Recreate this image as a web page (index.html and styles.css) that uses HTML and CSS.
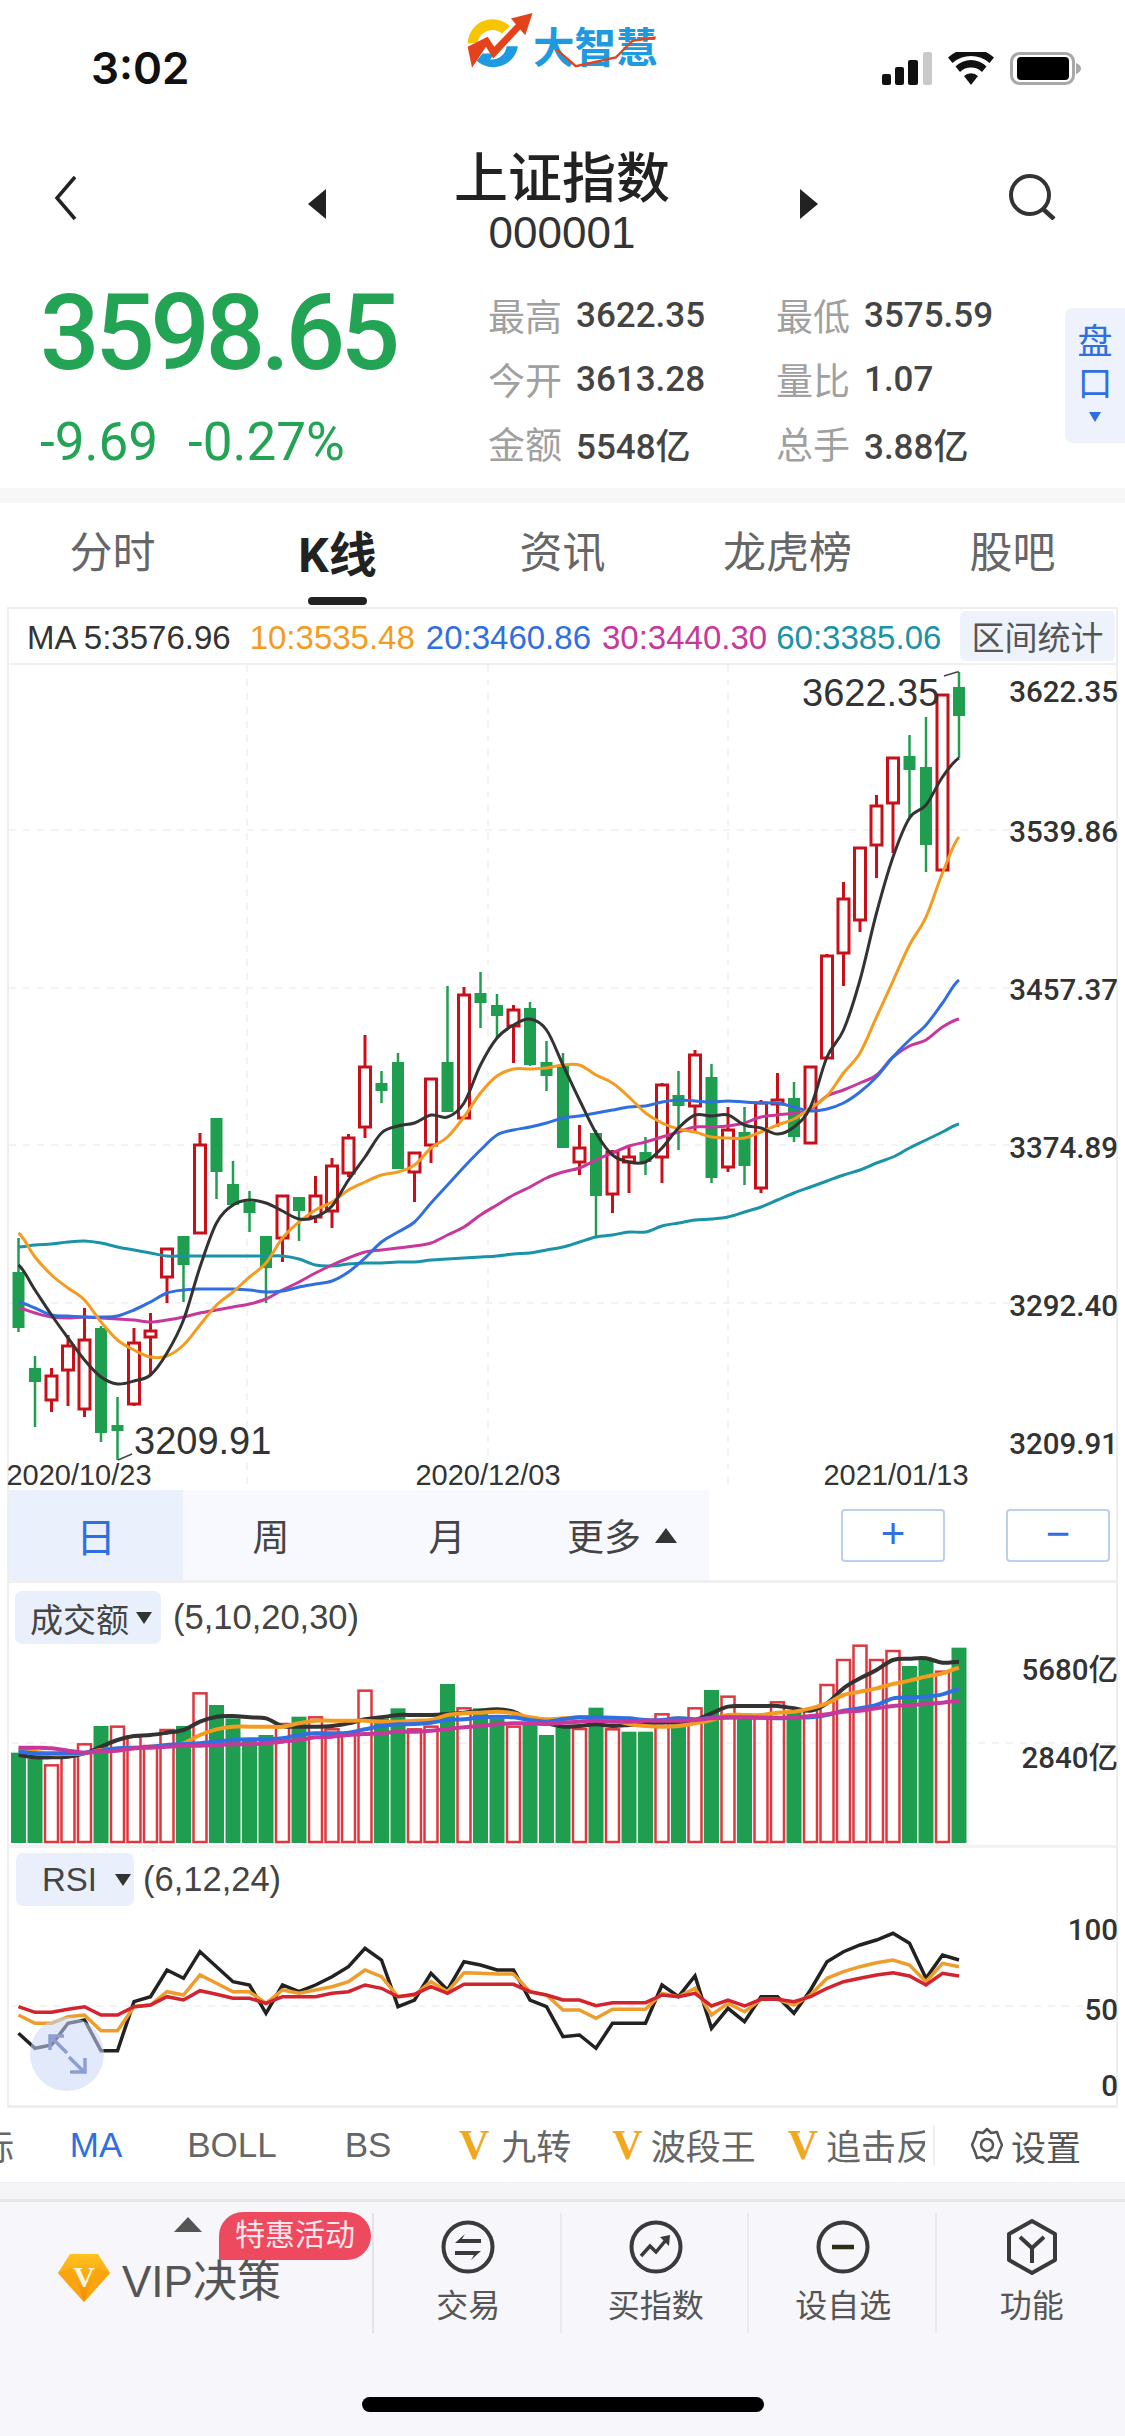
FILE: index.html
```html
<!DOCTYPE html>
<html lang="zh">
<head>
    <meta charset="utf-8">
    <title>上证指数 - K线</title>
    <link rel="stylesheet" href="styles.css">
</head>
<body>
    <div class="screen">
        <!-- status bar -->
        <div class="status">
            <span class="time">3:02</span>
            <svg class="logo" viewBox="140 30 580 185" width="193" height="62">
                <path d="M145 130A75 75 0 0 1 272 78L248 100A45 45 0 0 0 175 128Z" fill="#F7C600"/>
                <path d="M172 182A75 75 0 0 0 296 138L262 138A45 45 0 0 1 212 178L228 160L190 160Z" fill="#1E9BE0"/>
                <path d="M145 140L205 110L225 140L290 72L275 55L340 38L318 105L303 88L222 175L200 140L158 203Z" fill="#E4421B"/>
                <text class="logo-text" x="341" y="190">大智慧</text>
                <path d="M412 148L470 198L590 172L640 122L710 112" fill="none" stroke="#E4421B" stroke-width="7"/>
            </svg>
            <div class="status-icons">
                <svg width="50" height="33" viewBox="0 0 50 33">
                    <rect x="0" y="22" width="9" height="11" rx="2" fill="#111"/>
                    <rect x="13" y="15" width="9" height="18" rx="2" fill="#111"/>
                    <rect x="26" y="8" width="10" height="25" rx="2" fill="#111"/>
                    <rect x="41" y="0" width="9" height="33" rx="2" fill="#C9C9C9"/>
                </svg>
                <svg width="46" height="33" viewBox="0 0 46 33">
                    <path d="M23 33L16 24A10 10 0 0 1 30 24Z" fill="#111"/>
                    <path d="M12 20L7.500 14.500A22 22 0 0 1 38.500 14.500L34 20A16 16 0 0 0 12 20Z" fill="#111"/>
                    <path d="M4.500 11L0 5.500A34 34 0 0 1 46 5.500L41.500 11A28 28 0 0 0 4.500 11Z" fill="#111"/>
                </svg>
                <svg width="71" height="33" viewBox="0 0 71 33">
                    <rect x="1.500" y="1.500" width="62" height="30" rx="8" fill="none" stroke="#A8A8A8" stroke-width="3"/>
                    <rect x="7" y="5" width="52" height="23" rx="4" fill="#000"/>
                    <path d="M66 11C69 12 71 14 71 16.500S69 21 66 22Z" fill="#A8A8A8"/>
                </svg>
            </div>
        </div>

        <!-- stock title -->
        <div class="nav">
            <svg class="nav-back" width="23" height="46" viewBox="0 0 23 46">
                <path d="M21 2L3 23L21 44" fill="none" stroke="#222" stroke-width="3.500"/>
            </svg>
            <span class="tri-left"></span>
            <div class="nav-title">
                <div class="stock-name">上证指数</div>
                <div class="stock-code">000001</div>
            </div>
            <span class="tri-right"></span>
            <svg class="nav-search" width="48" height="46" viewBox="0 0 48 46">
                <circle cx="22" cy="21" r="19" fill="none" stroke="#333" stroke-width="4"/>
                <path d="M35 35L46 45" stroke="#333" stroke-width="4.500"/>
            </svg>
        </div>

        <!-- quote -->
        <div class="quote">
            <div class="price-box">
                <div class="last-price">3598.65</div>
                <div class="price-change"><span>-9.69</span><span>-0.27%</span></div>
            </div>
            <div class="quote-grid">
                <div class="cell"><span class="cell-key">最高</span><span class="cell-val">3622.35</span></div>
                <div class="cell"><span class="cell-key">最低</span><span class="cell-val">3575.59</span></div>
                <div class="cell"><span class="cell-key">今开</span><span class="cell-val">3613.28</span></div>
                <div class="cell"><span class="cell-key">量比</span><span class="cell-val">1.07</span></div>
                <div class="cell"><span class="cell-key">金额</span><span class="cell-val">5548亿</span></div>
                <div class="cell"><span class="cell-key">总手</span><span class="cell-val">3.88亿</span></div>
            </div>
            <div class="side-tab">
                <span>盘</span><span>口</span>
                <i class="side-arrow"></i>
            </div>
        </div>

        <div class="band"></div>

        <!-- tabs -->
        <div class="tabs">
            <a class="tab">分时</a>
            <a class="tab active">K线</a>
            <a class="tab">资讯</a>
            <a class="tab">龙虎榜</a>
            <a class="tab">股吧</a>
        </div>

        <!-- chart -->
        <div class="chart">
            <div class="ma-row">
                <span class="ma-black">MA 5:3576.96</span>
                <span class="ma-orange">10:3535.48</span>
                <span class="ma-blue">20:3460.86</span>
                <span class="ma-pink">30:3440.30</span>
                <span class="ma-teal">60:3385.06</span>
                <span class="stat-btn">区间统计</span>
            </div>

            <div class="price-panel">
                <svg id="priceChart" width="1107" height="825" viewBox="9 665 1107 825"></svg>
            </div>

            <div class="period-bar">
                <div class="period active">日</div>
                <div class="period">周</div>
                <div class="period">月</div>
                <div class="period more">更多<i class="up-arrow"></i></div>
                <div class="zoom-btns">
                    <span class="zoom-btn">+</span>
                    <span class="zoom-btn">−</span>
                </div>
            </div>

            <div class="sub-panel vol-panel">
                <svg id="volChart" width="1107" height="265" viewBox="9 1583 1107 265"></svg>
                <div class="sub-head">
                    <span class="chip chip-vol">成交额<i class="down-arrow"></i></span>
                    <span class="sub-params">(5,10,20,30)</span>
                </div>
            </div>

            <div class="sub-panel rsi-panel">
                <svg id="rsiChart" width="1107" height="257" viewBox="9 1848 1107 257"></svg>
                <div class="sub-head">
                    <span class="chip chip-rsi">RSI<i class="down-arrow"></i></span>
                    <span class="sub-params">(6,12,24)</span>
                </div>
                <svg class="expand-btn" width="74" height="74" viewBox="0 0 74 74">
                    <circle cx="37" cy="37" r="37" fill="#C9D7F5" fill-opacity="0.55"/>
                    <path d="M37 36L21 20M20 33V19H34M39 40L54 55M40 55H55V41" fill="none" stroke="#8D9FD2" stroke-width="3.500"/>
                </svg>
            </div>
        </div>

        <!-- indicator picker -->
        <div class="indicators">
            <div class="ind-scroll">
                <span class="ind ind-cut">指标</span>
                <span class="ind active">MA</span>
                <span class="ind">BOLL</span>
                <span class="ind">BS</span>
                <span class="ind-v first"><b>V</b>九转</span>
                <span class="ind-v second"><b>V</b>波段王</span>
                <span class="ind-v third"><b>V</b>追击反</span>
            </div>
            <div class="ind-setting">
                <svg width="32" height="36" viewBox="0 0 32 36">
                    <path d="M16 2L20 6L26 5L28 11L31 18L28 25L26 31L20 30L16 34L12 30L6 31L4 25L1 18L4 11L6 5L12 6Z" fill="none" stroke="#555" stroke-width="2.500" stroke-linejoin="round"/>
                    <circle cx="16" cy="18" r="6" fill="none" stroke="#555" stroke-width="2.500"/>
                </svg>
                <span>设置</span>
            </div>
        </div>

        <div class="band band-low"></div>

        <!-- bottom toolbar -->
        <div class="toolbar">
            <div class="tool-row">
                <div class="vip">
                    <i class="vip-arrow"></i>
                    <span class="vip-badge">特惠活动</span>
                    <svg width="52" height="48" viewBox="0 0 52 48">
                        <defs>
                            <linearGradient id="gem" x1="0" y1="0" x2="0" y2="1">
                                <stop offset="0" stop-color="#FFC21F"/>
                                <stop offset="1" stop-color="#F38A00"/>
                            </linearGradient>
                        </defs>
                        <path d="M12 0H40L52 19L26 48L0 19Z" fill="url(#gem)"/>
                        <path d="M0 19L14 14L26 48ZM52 19L38 14L26 48Z" fill="#F9A50F"/>
                        <text class="gem-v" x="26" y="33">V</text>
                    </svg>
                    <span class="vip-text">VIP决策</span>
                </div>
                <div class="tool">
                    <svg width="54" height="56" viewBox="0 0 54 56">
                        <circle cx="27" cy="28" r="24.500" fill="none" stroke="#3A3A3A" stroke-width="4"/>
                        <path d="M14 24H40V20H21L24 15Z" fill="#3A3A3A"/>
                        <path d="M40 32H14V36H33L30 41Z" fill="#3A3A3A"/>
                    </svg>
                    <span>交易</span>
                </div>
                <div class="tool">
                    <svg width="54" height="56" viewBox="0 0 54 56">
                        <circle cx="27" cy="28" r="24.500" fill="none" stroke="#3A3A3A" stroke-width="4"/>
                        <path d="M12 37L21 27L27 33L37 21" fill="none" stroke="#3A3A3A" stroke-width="3.500"/>
                        <path d="M31 18L41 16L40 27Z" fill="#3A3A3A"/>
                    </svg>
                    <span>买指数</span>
                </div>
                <div class="tool">
                    <svg width="54" height="56" viewBox="0 0 54 56">
                        <circle cx="27" cy="28" r="24.500" fill="none" stroke="#3A3A3A" stroke-width="4"/>
                        <path d="M16 28H38" stroke="#2E2E14" stroke-width="4.500"/>
                    </svg>
                    <span>设自选</span>
                </div>
                <div class="tool tool-last">
                    <svg width="54" height="56" viewBox="0 0 54 56">
                        <path d="M27 2L50 15V41L27 54L4 41V15Z" fill="none" stroke="#3A3A3A" stroke-width="4" stroke-linejoin="round"/>
                        <path d="M15 18L27 29L39 18M27 29V44" fill="none" stroke="#3A3A3A" stroke-width="4"/>
                    </svg>
                    <span>功能</span>
                </div>
            </div>
            <div class="home-bar"></div>
        </div>
    </div>

    <script src="chart.js"></script>
</body>
</html>
```

FILE: styles.css
```css
* {
    box-sizing: border-box;
}

body {
    margin: 0;
    background: white;
    font-family: Roboto, "Noto Sans CJK SC", sans-serif;
    color: #333;
}

.screen {
    width: 1125px;
    height: 2436px;
    display: flex;
    flex-direction: column;
    overflow: hidden;
}

/* status bar */
.status {
    height: 135px;
    display: grid;
    grid-template-columns: 466px 193px 1fr;
}

.time {
    padding: 40px 0 0 91px;
    font-family: Inter, "Liberation Sans", sans-serif;
    font-size: 44px;
    line-height: 56px;
    font-weight: 600;
    color: #111;
}

.logo {
    margin-top: 10px;
    overflow: visible;
}

.logo-text {
    font-family: "Noto Sans CJK SC", sans-serif;
    font-size: 125px;
    font-weight: 700;
    fill: #1E9BE0;
}

.status-icons {
    display: flex;
    align-items: flex-start;
    gap: 16px;
    padding: 52px 0 0 223px;
}

/* stock title */
.nav {
    height: 125px;
    padding-left: 54px;
    display: grid;
    grid-template-columns: 254px 18px 474px 18px 190px;
    align-items: start;
}

.nav-back {
    margin-top: 40px;
}

.tri-left,
.tri-right {
    width: 0;
    height: 0;
    margin-top: 54px;
    border-top: 15px solid transparent;
    border-bottom: 15px solid transparent;
}

.tri-left {
    border-right: 18px solid #222;
}

.tri-right {
    border-left: 18px solid #222;
}

.nav-title {
    text-align: center;
    padding-right: 2px;
}

.stock-name {
    margin-top: 6px;
    font-family: "Noto Sans CJK SC", sans-serif;
    font-size: 54px;
    line-height: 68px;
    font-weight: 500;
    color: #222;
}

.stock-code {
    font-family: "Liberation Sans", sans-serif;
    font-size: 44px;
    line-height: 48px;
    color: #333;
}

.nav-search {
    margin: 39px 0 0 190px;
}

/* quote */
.quote {
    height: 228px;
    display: flex;
    position: relative;
}

.price-box {
    width: 488px;
    padding: 14px 0 0 40px;
    color: #23A455;
}

.last-price {
    font-size: 105px;
    line-height: 120px;
    font-weight: 500;
    letter-spacing: -4.500px;
}

.price-change {
    margin-top: 18px;
    display: flex;
    gap: 30px;
    font-size: 53px;
    line-height: 60px;
}

.quote-grid {
    width: 577px;
    padding-top: 23px;
    display: grid;
    grid-template-columns: 288px 288px;
    grid-auto-rows: 64px;
}

.cell {
    display: flex;
    align-items: center;
    gap: 14px;
}

.cell-key {
    font-size: 37px;
    color: #A0A0A0;
}

.cell-val {
    font-size: 35px;
    font-weight: 500;
    color: #444;
}

.side-tab {
    width: 60px;
    height: 135px;
    margin-top: 48px;
    padding-top: 14px;
    display: flex;
    flex-direction: column;
    align-items: center;
    background: #EDF2FC;
    border-radius: 8px 0 0 8px;
    font-size: 35px;
    line-height: 42px;
    color: #2F6FE0;
}

.side-arrow {
    margin-top: 6px;
    border-top: 10px solid #2F6FE0;
    border-left: 6px solid transparent;
    border-right: 6px solid transparent;
}

.band {
    height: 15px;
    background: #F7F7F7;
}

.band-low {
    height: 20px;
    background: #F5F5F7;
    border-bottom: 3px solid #E6E6E6;
    border-top: 1px solid #EFEFEF;
}

/* tabs */
.tabs {
    height: 104px;
    display: flex;
}

.tab {
    flex: 1;
    text-align: center;
    padding-top: 22px;
    font-size: 43px;
    line-height: 56px;
    color: #666;
    position: relative;
}

.tab.active {
    padding-top: 25px;
    color: #222;
    font-weight: 700;
    font-size: 48px;
}

.tab.active::after {
    content: "";
    position: absolute;
    left: 83px;
    bottom: 2px;
    width: 59px;
    height: 8px;
    border-radius: 4px;
    background: #222;
}

/* chart */
.chart {
    margin: 0 7px;
    border: 2px solid #EEE;
    border-width: 2px 2px 3px;
    flex: none;
    height: 1501px;
}

.ma-row {
    height: 56px;
    padding: 4px 0 0 18px;
    display: flex;
    align-items: center;
    gap: 11px;
    border-bottom: 2px solid #F0F0F0;
    font-family: "Liberation Sans", sans-serif;
    font-size: 33px;
    white-space: nowrap;
}

.ma-black {
    color: #333;
    margin-right: 8px;
}

.ma-orange {
    color: #F39C1F;
}

.ma-blue {
    color: #2F6FE0;
}

.ma-pink {
    color: #C8389A;
}

.ma-teal {
    color: #1A93A8;
    margin-left: -2px;
}

.stat-btn {
    margin: -4px 1px 0 auto;
    width: 155px;
    height: 50px;
    text-align: center;
    line-height: 50px;
    background: #EEF2FB;
    border-radius: 6px;
    font-family: "Noto Sans CJK SC", sans-serif;
    font-size: 33px;
    color: #555;
}

.price-panel {
    height: 825px;
}

.price-panel svg,
.sub-panel > svg:first-child {
    display: block;
    overflow: visible;
}

.period-bar {
    height: 93px;
    display: flex;
    border-bottom: 3px solid #F0F0F0;
}

.period {
    width: 176px;
    height: 90px;
    display: flex;
    align-items: center;
    justify-content: center;
    background: #F7F9FE;
    font-size: 37px;
    color: #444;
}

.period.active {
    width: 174px;
    background: #EAF1FD;
    color: #2F6FE0;
    font-size: 40px;
}

.period.more {
    width: 174px;
}

.up-arrow {
    margin-left: 14px;
    border-bottom: 15px solid #333;
    border-left: 11px solid transparent;
    border-right: 11px solid transparent;
}

.zoom-btns {
    margin-left: auto;
    display: flex;
    gap: 61px;
    padding: 19px 6px 0 0;
}

.zoom-btn {
    width: 104px;
    height: 53px;
    text-align: center;
    border: 2px solid #BCD0EE;
    border-radius: 4px;
    font-family: "Liberation Sans", sans-serif;
    font-size: 42px;
    line-height: 46px;
    color: #2F6FE0;
}

.sub-panel {
    position: relative;
}

.vol-panel {
    height: 265px;
    border-bottom: 3px solid #F2F2F2;
}

.rsi-panel {
    height: 257px;
}

.sub-head {
    position: absolute;
    top: 8px;
    left: 6px;
    display: flex;
    align-items: center;
    gap: 12px;
}

.rsi-panel .sub-head {
    top: 5px;
    left: 7px;
    gap: 9px;
}

.chip {
    height: 53px;
    padding-left: 15px;
    display: flex;
    align-items: center;
    background: #EAF0FB;
    border-radius: 7px;
    font-family: "Noto Sans CJK SC", sans-serif;
    font-size: 33px;
    color: #444;
}

.chip-vol {
    width: 146px;
}

.chip-rsi {
    width: 118px;
    padding-left: 26px;
    font-family: "Liberation Sans", sans-serif;
}

.down-arrow {
    margin-left: 7px;
    border-top: 12px solid #333;
    border-left: 8px solid transparent;
    border-right: 8px solid transparent;
}

.chip-rsi .down-arrow {
    margin-left: 18px;
}

.sub-params {
    font-family: "Liberation Sans", sans-serif;
    font-size: 34.500px;
    color: #444;
}

.expand-btn {
    position: absolute;
    left: 21px;
    top: 169px;
}

/* indicator picker */
.indicators {
    height: 74px;
    display: flex;
    align-items: center;
    font-size: 35px;
    color: #666;
}

.ind-scroll {
    width: 925px;
    display: flex;
    align-items: center;
    overflow: hidden;
    white-space: nowrap;
    line-height: 50px;
}

.ind {
    flex: none;
    width: 136px;
    text-align: center;
    font-family: "Liberation Sans", sans-serif;
}

.ind.active {
    color: #2F6FE0;
}

.ind-cut {
    margin-left: -108px;
    padding-right: 14px;
    text-align: right;
    font-family: "Noto Sans CJK SC", sans-serif;
}

.ind-v {
    flex: none;
    display: flex;
    align-items: center;
    gap: 8px;
    font-family: "Noto Sans CJK SC", sans-serif;
}

.ind-v b {
    font-family: "Liberation Serif", serif;
    font-size: 42px;
    color: #F0A81E;
}

.ind-v.first {
    margin-left: 23px;
    gap: 12px;
}

.ind-v.second {
    margin-left: 41px;
}

.ind-v.third {
    margin-left: 32px;
}

.ind-setting {
    margin-left: 8px;
    height: 40px;
    padding-left: 36px;
    display: flex;
    align-items: center;
    gap: 8px;
    border-left: 2px solid #EEE;
    font-family: "Noto Sans CJK SC", sans-serif;
    color: #555;
}

/* bottom toolbar */
.toolbar {
    flex: 1;
    background: #F6F6FB;
    display: flex;
    flex-direction: column;
    align-items: center;
}

.tool-row {
    width: 100%;
    height: 131px;
    padding-top: 11px;
    display: flex;
}

.vip {
    width: 374px;
    position: relative;
    display: flex;
    align-items: center;
    gap: 12px;
    padding: 10px 0 0 58px;
    border-right: 2px solid #E4E4E8;
}

.vip-arrow {
    position: absolute;
    left: 174px;
    top: 4px;
    border-bottom: 15px solid #555;
    border-left: 14px solid transparent;
    border-right: 14px solid transparent;
}

.vip-badge {
    position: absolute;
    left: 219px;
    top: -1px;
    width: 152px;
    height: 48px;
    text-align: center;
    line-height: 46px;
    background: #EE4A5F;
    border-radius: 24px 24px 24px 0;
    font-size: 30px;
    color: #FFE6EA;
}

.vip-text {
    font-family: "Liberation Sans", "Noto Sans CJK SC", sans-serif;
    font-size: 44px;
    color: #555;
}

.gem-v {
    font-family: "Liberation Serif", serif;
    font-weight: 700;
    font-size: 30px;
    fill: #FFF6DF;
    text-anchor: middle;
}

.tool {
    width: 187.500px;
    display: flex;
    flex-direction: column;
    align-items: center;
    gap: 12px;
    padding: 6px 0 0 3px;
    border-right: 2px solid #E9E9EE;
    font-size: 32px;
    line-height: 38px;
    color: #555;
}

.tool-last {
    border-right: none;
}

.home-bar {
    width: 402px;
    height: 15px;
    margin-top: 64px;
    border-radius: 8px;
    background: black;
}

/* svg chart parts */
.grid-line {
    stroke: #F0F0F0;
    stroke-width: 1.500;
    stroke-dasharray: 7 7;
}

.axis-text {
    font-family: Roboto, "Noto Sans CJK SC", sans-serif;
    font-size: 29.500px;
    font-weight: 500;
    fill: #333;
    text-anchor: end;
    dominant-baseline: central;
}

.date-text {
    font-family: "Liberation Sans", sans-serif;
    font-size: 29px;
    fill: #333;
    text-anchor: middle;
    dominant-baseline: central;
}

.mark-text {
    font-family: "Liberation Sans", sans-serif;
    font-size: 38px;
    fill: #333;
    dominant-baseline: central;
}

.mark-line {
    stroke: #444;
    stroke-width: 1.500;
    fill: none;
}

.up-wick {
    stroke: #C8101A;
    stroke-width: 3;
}

.up-body {
    stroke: #C8101A;
    stroke-width: 3;
    fill: none;
}

.down-wick {
    stroke: #1F9E4F;
    stroke-width: 2.500;
}

.down-body {
    fill: #1F9E4F;
}

.vol-up {
    stroke: #DD3840;
    stroke-width: 2.500;
    fill: none;
}

.vol-down {
    fill: #1F9E4F;
}

.line {
    fill: none;
    stroke-width: 3;
}

.vol-panel .line {
    stroke-width: 4;
}

.rsi-panel .line {
    stroke-width: 3.500;
    stroke-linejoin: miter;
}

.line-black {
    stroke: #333;
}

.line-orange {
    stroke: #F39C1F;
}

.line-blue {
    stroke: #2F6FE0;
}

.line-pink {
    stroke: #C8389A;
}

.line-teal {
    stroke: #1A93A8;
}

.line-red {
    stroke: #D2232F;
}

.rsi-orange {
    stroke: #EE9C2B;
}

.rsi-black {
    stroke: #222;
}
```

FILE: chart.js
```js
// x position of candle number i, same step in all three panels
function xOf(i) {
    return 18.5 + 16.5 * i;
}

function add(svg, tag, attrs, text) {
    const el = document.createElementNS('http://www.w3.org/2000/svg', tag);
    for (const k in attrs) el.setAttribute(k, attrs[k]);
    if (text) el.textContent = text;
    svg.appendChild(el);
    return el;
}

// catmull-rom through the points, MA lines are smooth
function smooth(ys) {
    let d = 'M' + xOf(0) + ' ' + ys[0];
    for (let i = 0; i < ys.length - 1; i++) {
        const y0 = ys[Math.max(i - 1, 0)], y1 = ys[i], y2 = ys[i + 1], y3 = ys[Math.min(i + 2, ys.length - 1)];
        const c1 = (y1 + (y2 - y0) / 6).toFixed(1), c2 = (y2 - (y3 - y1) / 6).toFixed(1);
        d += 'C' + (xOf(i) + 5.5) + ' ' + c1 + ' ' + (xOf(i + 1) - 5.5) + ' ' + c2 + ' ' + xOf(i + 1) + ' ' + y2;
    }
    return d;
}

function straight(ys) {
    return 'M' + ys.map((y, i) => xOf(i) + ' ' + y.toFixed(1)).join('L');
}

// [up?, wick top, body top, body bottom, wick bottom]
const candles = [
    [0, 1238, 1272, 1328, 1332], [0, 1356, 1368, 1382, 1427], [1, 1368, 1376, 1400, 1412], [1, 1335, 1346, 1370, 1406],
    [1, 1308, 1340, 1409, 1417], [0, 1326, 1328, 1433, 1442], [0, 1397, 1425, 1431, 1460], [1, 1328, 1343, 1404, 1406],
    [1, 1313, 1331, 1337, 1375], [1, 1248, 1249, 1277, 1303], [0, 1236, 1236, 1265, 1302], [1, 1133, 1145, 1233, 1233],
    [0, 1118, 1118, 1172, 1199], [0, 1161, 1184, 1205, 1205], [0, 1191, 1202, 1213, 1232], [0, 1236, 1236, 1268, 1303],
    [1, 1196, 1196, 1238, 1262], [0, 1197, 1197, 1211, 1241], [1, 1176, 1196, 1217, 1223], [1, 1158, 1166, 1211, 1228],
    [1, 1134, 1138, 1173, 1177], [1, 1035, 1067, 1127, 1138], [0, 1071, 1083, 1091, 1103], [0, 1053, 1062, 1169, 1169],
    [1, 1152, 1153, 1172, 1202], [1, 1078, 1079, 1145, 1163], [0, 986, 1062, 1112, 1112], [1, 987, 995, 1118, 1118],
    [0, 972, 993, 1003, 1028], [0, 994, 1005, 1016, 1038], [1, 1005, 1010, 1026, 1063], [0, 1002, 1008, 1065, 1066],
    [0, 1041, 1062, 1076, 1091], [0, 1053, 1065, 1148, 1148], [1, 1125, 1148, 1162, 1175], [0, 1130, 1133, 1196, 1237],
    [1, 1150, 1152, 1194, 1213], [1, 1147, 1157, 1162, 1193], [0, 1137, 1152, 1162, 1175], [1, 1083, 1085, 1157, 1183],
    [0, 1071, 1095, 1106, 1150], [1, 1050, 1055, 1106, 1133], [0, 1064, 1077, 1178, 1183], [1, 1107, 1130, 1167, 1172],
    [0, 1107, 1132, 1166, 1185], [1, 1100, 1103, 1188, 1193], [1, 1073, 1100, 1104, 1127], [0, 1082, 1098, 1137, 1142],
    [1, 1067, 1067, 1143, 1143], [1, 954, 956, 1058, 1058], [1, 882, 899, 953, 986], [1, 848, 848, 920, 932],
    [1, 795, 806, 845, 878], [1, 758, 758, 803, 853], [0, 735, 756, 770, 817], [0, 717, 767, 845, 872],
    [1, 695, 695, 870, 872], [0, 672, 687, 716, 758]
];

const ma5 = [1265, 1290, 1315, 1338, 1360, 1377, 1384, 1381, 1375, 1353, 1320, 1267, 1223, 1205, 1200, 1203, 1211, 1219, 1217, 1206, 1180, 1157, 1133, 1126, 1123, 1115, 1117, 1103, 1065, 1038, 1025, 1019, 1030, 1065, 1100, 1133, 1155, 1162, 1162, 1148, 1128, 1115, 1116, 1115, 1125, 1128, 1134, 1127, 1107, 1057, 1030, 980, 913, 857, 818, 805, 777, 758];
const ma10 = [1233, 1257, 1275, 1288, 1300, 1322, 1340, 1350, 1357, 1356, 1345, 1325, 1305, 1292, 1277, 1263, 1238, 1222, 1210, 1202, 1190, 1182, 1175, 1172, 1165, 1148, 1137, 1117, 1093, 1076, 1069, 1069, 1068, 1065, 1065, 1075, 1083, 1097, 1113, 1123, 1129, 1132, 1137, 1138, 1138, 1132, 1125, 1119, 1108, 1096, 1073, 1053, 1017, 981, 945, 917, 873, 837];
const ma20 = [1302, 1308, 1315, 1316, 1317, 1317, 1316, 1310, 1302, 1293, 1290, 1289, 1289, 1289, 1290, 1292, 1291, 1287, 1284, 1281, 1272, 1258, 1242, 1232, 1222, 1203, 1185, 1167, 1150, 1135, 1130, 1127, 1123, 1118, 1116, 1113, 1110, 1107, 1106, 1102, 1100, 1101, 1102, 1101, 1102, 1103, 1103, 1107, 1111, 1109, 1103, 1092, 1077, 1057, 1040, 1025, 1003, 980];
const ma30 = [1308, 1313, 1317, 1318, 1317, 1318, 1319, 1320, 1322, 1320, 1317, 1313, 1310, 1307, 1304, 1299, 1290, 1282, 1273, 1265, 1258, 1252, 1250, 1248, 1246, 1243, 1235, 1227, 1215, 1205, 1195, 1187, 1178, 1172, 1168, 1160, 1153, 1146, 1142, 1137, 1132, 1127, 1127, 1126, 1123, 1117, 1115, 1113, 1109, 1096, 1090, 1083, 1075, 1057, 1046, 1040, 1027, 1019];
const ma60 = [1247, 1245, 1244, 1242, 1241, 1243, 1247, 1250, 1253, 1256, 1256, 1256, 1256, 1256, 1256, 1256, 1256, 1259, 1265, 1266, 1264, 1263, 1263, 1262, 1262, 1260, 1259, 1258, 1257, 1256, 1254, 1253, 1250, 1247, 1242, 1237, 1235, 1232, 1232, 1226, 1223, 1220, 1219, 1217, 1212, 1207, 1200, 1193, 1187, 1181, 1175, 1170, 1163, 1157, 1148, 1140, 1132, 1124];

// volume numbers are thirds of a pixel below y = 1580
const vol = [
    [0, 518], [0, 535], [1, 556], [1, 528], [1, 493], [0, 438], [1, 440], [1, 470], [1, 498], [1, 450], [0, 438], [1, 340],
    [0, 375], [0, 415], [0, 475], [0, 465], [1, 432], [0, 410], [1, 412], [1, 448], [1, 462], [1, 332], [0, 415], [0, 385],
    [1, 448], [1, 440], [0, 312], [1, 385], [0, 385], [0, 415], [1, 440], [0, 430], [0, 465], [0, 442], [1, 447], [0, 383],
    [1, 448], [0, 455], [0, 455], [1, 403], [0, 410], [1, 385], [0, 330], [1, 350], [0, 405], [1, 412], [1, 367], [0, 395],
    [1, 390], [1, 315], [1, 240], [1, 197], [1, 240], [1, 213], [0, 258], [0, 240], [1, 275], [0, 203]
];
const volBlack = [525, 532, 532, 530, 520, 500, 480, 468, 465, 458, 450, 425, 410, 408, 412, 415, 438, 440, 440, 438, 430, 418, 412, 405, 405, 405, 402, 398, 392, 388, 395, 420, 430, 440, 438, 433, 438, 435, 430, 428, 425, 420, 400, 380, 378, 378, 378, 385, 392, 370, 325, 295, 270, 240, 236, 235, 248, 245];
const volOrange = [510, 515, 522, 522, 520, 510, 510, 505, 500, 497, 490, 465, 448, 440, 440, 440, 440, 430, 422, 422, 422, 422, 425, 425, 422, 420, 405, 400, 398, 395, 400, 412, 418, 415, 412, 415, 420, 432, 438, 440, 438, 430, 420, 405, 405, 405, 398, 395, 385, 370, 345, 335, 325, 312, 302, 290, 280, 263];
const volBlue = [515, 520, 520, 520, 518, 512, 505, 503, 500, 495, 492, 490, 485, 480, 478, 478, 475, 465, 460, 460, 458, 448, 438, 433, 432, 428, 420, 418, 412, 410, 412, 420, 425, 418, 412, 412, 413, 415, 420, 420, 415, 418, 413, 412, 413, 413, 415, 413, 412, 405, 392, 385, 375, 355, 352, 350, 343, 328];
const volPink = [503, 503, 505, 512, 518, 515, 512, 505, 503, 500, 498, 497, 495, 493, 493, 490, 485, 480, 472, 470, 465, 462, 460, 455, 455, 452, 447, 442, 438, 433, 430, 430, 432, 428, 425, 422, 425, 425, 422, 422, 422, 420, 415, 413, 412, 413, 413, 413, 408, 403, 395, 392, 385, 378, 375, 372, 368, 362];

// rsi numbers are thirds of a pixel below y = 1960
const rsi6 = [220, 265, 255, 190, 180, 272, 272, 125, 110, 30, 55, -25, 20, 65, 75, 160, 75, 95, 75, 50, 20, -35, 0, 140, 120, 40, 90, 5, 15, 30, 30, 120, 140, 230, 225, 265, 190, 190, 190, 75, 110, 48, 205, 145, 185, 110, 110, 160, 90, 5, -25, -45, -60, -80, -50, 55, -15, 0];
const rsi12 = [165, 190, 190, 170, 165, 212, 212, 140, 135, 95, 105, 45, 70, 95, 95, 130, 90, 100, 90, 80, 65, 30, 50, 110, 105, 65, 95, 38, 40, 42, 42, 95, 105, 150, 150, 175, 148, 148, 148, 100, 110, 85, 165, 130, 155, 118, 118, 135, 105, 55, 35, 20, 8, 0, 15, 65, 10, 20];
const rsi24 = [140, 157, 157, 148, 140, 165, 165, 140, 135, 110, 120, 92, 103, 115, 115, 130, 110, 110, 110, 100, 95, 75, 85, 110, 103, 80, 100, 73, 73, 73, 73, 95, 105, 120, 120, 137, 128, 128, 128, 105, 110, 100, 138, 120, 138, 118, 118, 125, 110, 85, 65, 55, 45, 38, 48, 75, 40, 48];

function drawPrice() {
    const svg = document.getElementById('priceChart');

    [830, 988, 1145, 1303].forEach(y => add(svg, 'line', { class: 'grid-line', x1: 9, y1: y, x2: 1116, y2: y }));
    [247, 488, 728].forEach(x => add(svg, 'line', { class: 'grid-line', x1: x, y1: 665, x2: x, y2: 1490 }));

    candles.forEach((c, i) => {
        const x = xOf(i);
        if (c[0]) {
            add(svg, 'line', { class: 'up-wick', x1: x, y1: c[1], x2: x, y2: c[2] });
            add(svg, 'line', { class: 'up-wick', x1: x, y1: c[3], x2: x, y2: c[4] });
            add(svg, 'rect', { class: 'up-body', x: x - 5.5, y: c[2], width: 11, height: c[3] - c[2] });
        } else {
            add(svg, 'line', { class: 'down-wick', x1: x, y1: c[1], x2: x, y2: c[4] });
            add(svg, 'rect', { class: 'down-body', x: x - 6, y: c[2], width: 12, height: c[3] - c[2] });
        }
    });

    [[ma60, 'line-teal'], [ma30, 'line-pink'], [ma20, 'line-blue'], [ma10, 'line-orange'], [ma5, 'line-black']].forEach(m => {
        add(svg, 'path', { class: 'line ' + m[1], d: smooth(m[0]) });
    });

    [['3622.35', 692], ['3539.86', 832], ['3457.37', 990], ['3374.89', 1148], ['3292.40', 1306], ['3209.91', 1444]].forEach(a => {
        add(svg, 'text', { class: 'axis-text', x: 1118, y: a[1] }, a[0]);
    });
    [['2020/10/23', 79], ['2020/12/03', 488], ['2021/01/13', 896]].forEach(a => {
        add(svg, 'text', { class: 'date-text', x: a[1], y: 1475 }, a[0]);
    });

    add(svg, 'text', { class: 'mark-text', x: 802, y: 693 }, '3622.35');
    add(svg, 'path', { class: 'mark-line', d: 'M944 676L957 672H959' });
    add(svg, 'text', { class: 'mark-text', x: 134, y: 1441 }, '3209.91');
    add(svg, 'path', { class: 'mark-line', d: 'M118 1460L132 1454' });
}

function drawVolume() {
    const svg = document.getElementById('volChart');
    const base = 1843;

    add(svg, 'line', { class: 'grid-line', x1: 12, y1: 1743, x2: 1116, y2: 1743 });
    vol.forEach((v, i) => {
        const x = xOf(i), top = 1580 + v[1] / 3;
        if (v[0]) add(svg, 'rect', { class: 'vol-up', x: x - 6.5, y: top, width: 13, height: base - top - 1 });
        else add(svg, 'rect', { class: 'vol-down', x: x - 7.5, y: top, width: 15, height: base - top });
    });

    [[volBlack, 'line-black'], [volOrange, 'line-orange'], [volBlue, 'line-blue'], [volPink, 'line-pink']].forEach(m => {
        add(svg, 'path', { class: 'line ' + m[1], d: smooth(m[0].map(v => 1580 + v / 3)) });
    });

    add(svg, 'text', { class: 'axis-text', x: 1118, y: 1670 }, '5680亿');
    add(svg, 'text', { class: 'axis-text', x: 1118, y: 1758 }, '2840亿');
}

function drawRsi() {
    const svg = document.getElementById('rsiChart');

    add(svg, 'line', { class: 'grid-line', x1: 12, y1: 2006, x2: 1116, y2: 2006 });
    [[rsi6, 'rsi-black'], [rsi12, 'rsi-orange'], [rsi24, 'line-red']].forEach(m => {
        add(svg, 'path', { class: 'line ' + m[1], d: straight(m[0].map(v => 1960 + v / 3)) });
    });

    add(svg, 'text', { class: 'axis-text', x: 1118, y: 1930 }, '100');
    add(svg, 'text', { class: 'axis-text', x: 1118, y: 2010 }, '50');
    add(svg, 'text', { class: 'axis-text', x: 1118, y: 2086 }, '0');
}

drawPrice();
drawVolume();
drawRsi();
```
